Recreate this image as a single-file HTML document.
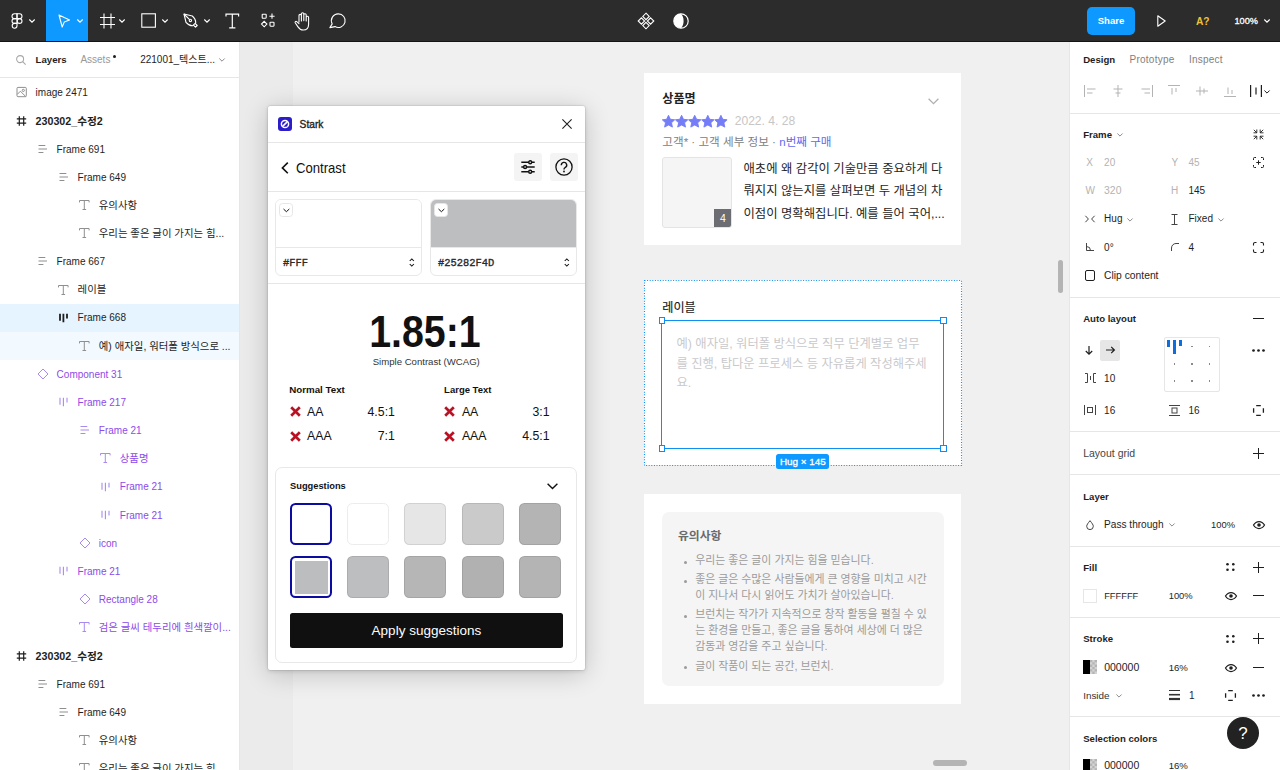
<!DOCTYPE html>
<html lang="ko">
<head>
<meta charset="utf-8">
<title>Figma - Stark Contrast</title>
<style>
*{box-sizing:border-box;margin:0;padding:0}
html,body{width:1280px;height:770px;overflow:hidden;background:#f0f0f0}
body{font-family:"Liberation Sans","Noto Sans CJK KR",sans-serif;font-size:10px;color:#1e1e1e;position:relative}
.abs{position:absolute}
svg{display:block;overflow:visible}
/* ---------- toolbar ---------- */
#toolbar{position:absolute;left:0;top:0;width:1280px;height:42px;background:#2c2c2c;border-bottom:1px solid #141414}
#toolbar .active{position:absolute;left:46px;top:0;width:42px;height:41px;background:#0d99ff}
#toolbar svg{position:absolute}
.tb-txt{position:absolute;color:#fff;font-size:10px;line-height:12px;white-space:nowrap}
#share{position:absolute;left:1087px;top:7px;width:48px;height:28px;border-radius:5px;background:#0d99ff;color:#fff;font-weight:bold;font-size:9.6px;line-height:28px;text-align:center}
/* ---------- left panel ---------- */
#left{position:absolute;left:0;top:42px;width:240px;height:728px;background:#fff;border-right:1px solid #e6e6e6;overflow:hidden}
#left .hdr{position:absolute;left:0;top:0;width:240px;height:36px;border-bottom:1px solid #e6e6e6}
#left .hdr span{position:absolute;top:12px;line-height:12px;white-space:nowrap}
.row{position:absolute;left:0;width:239px;height:28px}
.row .ic{position:absolute;top:8px;width:12px;height:12px}
.row .lb{position:absolute;top:7.8px;line-height:14px;white-space:nowrap;font-size:10px;letter-spacing:0}
.row.p .lb{color:#8d4be8}
.row.sel{background:#e5f4ff}
.row.sel2{background:#f2f9ff}
/* ---------- canvas ---------- */
#cv{position:absolute;left:0;top:0;width:1280px;height:770px;overflow:hidden}
#cvbg{position:absolute;left:240px;top:42px;width:829px;height:728px;background:#f0f0f0}
#strip{position:absolute;left:240px;top:42px;width:53px;height:728px;background:#ebebeb}
.card{position:absolute;background:#fff}
.k{position:absolute;white-space:nowrap}
.nt{left:51.200px;font-size:10.900px;line-height:16.100px;color:#9b9b9b}
.bl{position:absolute;left:40.300px;width:3px;height:3px;border-radius:50%;background:#9b9b9b}
.hd{position:absolute;width:6.500px;height:6.500px;background:#fff;border:1px solid #0e8eee}
/* ---------- stark ---------- */
#stark{position:absolute;left:267.500px;top:106px;width:317.500px;height:564px;background:#fff;border-radius:2px;box-shadow:0 0 0 .5px rgba(0,0,0,.10),0 1px 4px rgba(0,0,0,.14),0 4px 26px rgba(0,0,0,.20)}
.sx{display:inline-block;transform-origin:left center}
.cbox{position:absolute;top:93.200px;width:147.200px;height:76.400px;border:1px solid #e8e8e8;border-radius:6px;overflow:hidden;background:#fff}
.cfill{position:absolute;left:0;top:0;width:100%;height:47.500px;border-bottom:1px solid #e8e8e8}
.cbtn{position:absolute;left:3.400px;top:3.300px;width:13.400px;height:13.400px;border:1px solid #e6e6e6;border-radius:3.500px;background:#fff}
.cbtn svg{position:absolute;left:2.200px;top:3.700px}
.chex{position:absolute;left:7px;top:56.500px;font-family:"Liberation Mono",monospace;font-weight:normal;-webkit-text-stroke:.35px #2a2a2a;font-size:10.400px;line-height:13px;color:#2a2a2a;white-space:nowrap}
.cud{position:absolute;left:133.300px;top:57.600px}
.xi{position:absolute;fill:none;stroke:#b91224;stroke-width:2.700}
.rt{font-size:12.300px;line-height:17px;color:#111}
.rt.r{width:50px;text-align:right}
.sw{position:absolute;width:42px;height:42px;border-radius:5.500px;border:1px solid rgba(0,0,0,.09)}
.sw.on{border:2px solid #0c0ca2}
/* ---------- right panel ---------- */
#right{position:absolute;left:1069px;top:42px;width:211px;height:728px;background:#fff;border-left:1px solid #e6e6e6;overflow:hidden}
#right .t{position:absolute;line-height:12px;white-space:nowrap;font-size:10px}
#right .b{font-weight:bold;font-size:9.6px}
#right .g{color:#b3b3b3}
#right .ls{letter-spacing:.25px}
#right .hr{position:absolute;left:0;width:211px;height:1px;background:#e6e6e6}
#right svg{position:absolute}
</style>
</head>
<body>
<div id="cv">
  <div id="cvbg"></div>
  <div id="strip"></div>
  <!-- card 1 : review -->
  <div class="card" style="left:644px;top:73px;width:317.300px;height:172.200px">
    <div class="k" style="left:18.300px;top:17.200px;font-weight:bold;font-size:12.100px;line-height:18px;color:#222">상품명</div>
    <svg class="abs" style="left:284px;top:25px" width="11" height="7" viewBox="0 0 11 7" fill="none" stroke="#b0b0b0" stroke-width="1.300"><path d="M.600.800l4.900 4.900L10.400.800"/></svg>
    <svg class="abs" style="left:18px;top:41.500px" width="66" height="13" viewBox="0 0 66 13" fill="#747cf8" stroke="#747cf8" stroke-width=".9" stroke-linejoin="round">
      <path d="M6.500.300l1.900 4 4.300.500-3.200 3 .900 4.300L6.500 10 2.600 12.100l.900-4.300-3.200-3 4.300-.500z"/>
      <path d="M6.500.300l1.900 4 4.300.500-3.200 3 .900 4.300L6.500 10 2.600 12.100l.900-4.300-3.200-3 4.300-.500z" transform="translate(13.100 0)"/>
      <path d="M6.500.300l1.900 4 4.300.500-3.200 3 .900 4.300L6.500 10 2.600 12.100l.900-4.300-3.200-3 4.300-.500z" transform="translate(26.200 0)"/>
      <path d="M6.500.300l1.900 4 4.300.500-3.200 3 .900 4.300L6.500 10 2.600 12.100l.900-4.300-3.200-3 4.300-.500z" transform="translate(39.300 0)"/>
      <path d="M6.500.300l1.900 4 4.300.500-3.200 3 .900 4.300L6.500 10 2.600 12.100l.900-4.300-3.200-3 4.300-.500z" transform="translate(52.400 0)"/>
    </svg>
    <div class="k" style="left:90.700px;top:39.700px;font-size:12.100px;line-height:16px;color:#c6c6c6">2022. 4. 28</div>
    <div class="k" style="left:18.300px;top:60px;font-size:11.600px;line-height:17px;color:#808080">고객* · 고객 세부 정보 · <span style="color:#5f6bee">n번째 구매</span></div>
    <div class="abs" style="left:18.300px;top:84.300px;width:69.500px;height:70.300px;background:#f5f5f5;border:1px solid #e4e4e4;border-radius:3px;overflow:hidden">
      <div class="abs" style="right:-1px;bottom:-1px;width:18px;height:18.500px;background:#6c6d72;color:#fff;font-size:10.500px;line-height:18px;text-align:center">4</div>
    </div>
    <div class="k" style="left:99.500px;top:85.400px;font-size:12.350px;line-height:22.100px;color:#262626;width:215px;white-space:normal">애초에 왜 감각이 기술만큼 중요하게 다<br>뤄지지 않는지를 살펴보면 두 개념의 차<br>이점이 명확해집니다. 예를 들어 국어,...</div>
  </div>
  <!-- card 2 : label + textarea -->
  <div class="card" style="left:644px;top:280px;width:317.500px;height:185px">
    <div class="k" style="left:18.300px;top:18.600px;font-size:12.100px;line-height:18px;color:#1a1a1a;font-weight:400;-webkit-text-stroke:.15px #1a1a1a">레이블</div>
    <div class="k" style="left:32.500px;top:55.300px;font-size:12.300px;line-height:19.500px;color:#c9c9cb;width:260px;white-space:normal">예) 애자일, 워터폴 방식으로 직무 단계별로 업무<br>를 진행, 탑다운 프로세스 등 자유롭게 작성해주세<br>요.</div>
  </div>
  <svg class="abs" style="left:644px;top:280px" width="318" height="187" viewBox="0 0 318 187" fill="none"><rect x=".500" y=".500" width="317" height="185" stroke="#0e8eee" stroke-width="1.100" stroke-dasharray="1 1.600"/></svg>
  <div class="abs" style="left:661px;top:319.500px;width:283px;height:129px;border:1.500px solid #0e90f2"></div>
  <div class="hd" style="left:658.500px;top:317px"></div><div class="hd" style="left:940px;top:317px"></div>
  <div class="hd" style="left:658.500px;top:445px"></div><div class="hd" style="left:940px;top:445px"></div>
  <div class="abs" style="left:776.300px;top:454.300px;width:53.200px;height:15px;border-radius:2.500px;background:#0d99ff;color:#fff;font-weight:normal;-webkit-text-stroke:.3px #fff;font-size:9.900px;line-height:15px;text-align:center;white-space:nowrap">Hug × 145</div>
  <!-- card 3 : notice -->
  <div class="card" style="left:644px;top:494px;width:317px;height:210px">
    <div class="abs" style="left:18px;top:18px;width:281.500px;height:174px;background:#f5f5f5;border-radius:7px"></div>
    <div class="k" style="left:34px;top:34px;font-weight:bold;font-size:11.800px;line-height:17px;color:#6a6a6a">유의사항</div>
    <div class="k nt" style="top:57.800px">우리는 좋은 글이 가지는 힘을 믿습니다.</div>
    <div class="k nt" style="top:77px">좋은 글은 수많은 사람들에게 큰 영향을 미치고 시간<br>이 지나서 다시 읽어도 가치가 살아있습니다.</div>
    <div class="k nt" style="top:112.300px">브런치는 작가가 지속적으로 창작 활동을 펼칠 수 있<br>는 환경을 만들고, 좋은 글을 통하여 세상에 더 많은<br>감동과 영감을 주고 싶습니다.</div>
    <div class="k nt" style="top:163.700px">글이 작품이 되는 공간, 브런치.</div>
    <i class="bl" style="top:66.500px"></i><i class="bl" style="top:85.500px"></i><i class="bl" style="top:121px"></i><i class="bl" style="top:172.300px"></i>
  </div>
  <!-- scrollbars -->
  <div class="abs" style="left:1058px;top:259.500px;width:5px;height:33px;border-radius:3px;background:#b4b4b4"></div>
  <div class="abs" style="left:933px;top:760px;width:33.500px;height:6px;border-radius:3px;background:#b4b4b4"></div>
<div id="stark">
  <div class="abs" style="left:0;top:36px;width:100%;height:1px;background:#e6e6e6"></div>
  <div class="abs" style="left:10.600px;top:10.800px;width:14px;height:14px;border-radius:3px;background:#2b1dc9">
    <svg class="abs" style="left:2px;top:2px" width="10" height="10" viewBox="0 0 10 10" fill="none" stroke="#fff" stroke-width="1.500"><circle cx="5" cy="5" r="3.600"/><path d="M2.600 7.400l4.800-4.800"/></svg>
  </div>
  <div class="k" style="left:32.100px;top:11.800px;font-size:10.200px;line-height:13px;color:#222;-webkit-text-stroke:.35px #222">Stark</div>
  <svg class="abs" style="left:294.400px;top:13.200px" width="10" height="10" viewBox="0 0 10 10" fill="none" stroke="#1e1e1e" stroke-width="1.100"><path d="M.400.400l9.200 9.200M9.600.400L.400 9.600"/></svg>
  <!-- contrast row -->
  <svg class="abs" style="left:13.200px;top:55.800px" width="8" height="12" viewBox="0 0 8 12" fill="none" stroke="#111" stroke-width="1.600"><path d="M6.800.700L1.400 5.900l5.400 5.300"/></svg>
  <div class="k" style="left:28.900px;top:53.200px;font-size:14.200px;line-height:19px;color:#111"><span class="sx" style="transform:scaleX(.924)">Contrast</span></div>
  <div class="abs" style="left:246.800px;top:47.100px;width:28px;height:28px;border-radius:3px;background:#f4f4f4">
    <svg class="abs" style="left:7px;top:7px" width="14" height="14" viewBox="0 0 14 14" fill="none" stroke="#111" stroke-width="1.400"><path d="M.300 2.200h7.400M10.700 2.200h3M.300 7h2.300M5.600 7h8.100M.300 11.800h7.400M10.700 11.800h3"/><circle cx="9.200" cy="2.200" r="1.500"/><circle cx="4.100" cy="7" r="1.500"/><circle cx="9.200" cy="11.800" r="1.500"/></svg>
  </div>
  <div class="abs" style="left:282.300px;top:47.100px;width:28px;height:28px;border-radius:3px;background:#f4f4f4">
    <svg class="abs" style="left:5.300px;top:5.200px" width="18" height="18" viewBox="0 0 18 18" fill="none" stroke="#111" stroke-width="1.300"><circle cx="9" cy="9" r="8.100"/><path d="M6.300 7.200a2.700 2.700 0 1 1 3.900 2.300c-.8.500-1.200.9-1.200 1.900" stroke-width="1.400"/><circle cx="9" cy="13.500" r=".900" fill="#111" stroke="none"/></svg>
  </div>
  <div class="abs" style="left:0;top:85px;width:100%;height:1px;background:#e6e6e6"></div>
  <!-- colour boxes -->
  <div class="cbox" style="left:7.500px">
    <div class="cfill" style="background:#fff"></div>
    <div class="cbtn"><svg width="7" height="5" viewBox="0 0 7 5" fill="none" stroke="#111" stroke-width="1"><path d="M.500 1l2.900 2.700L6.300 1"/></svg></div>
    <div class="chex">#FFF</div>
    <svg class="cud" width="6" height="9" viewBox="0 0 6 9" fill="none" stroke="#111" stroke-width="1.050"><path d="M.700 3l2.100-2.100L4.900 3M.700 6l2.100 2.100L4.900 6"/></svg>
  </div>
  <div class="cbox" style="left:162.500px">
    <div class="cfill" style="background:#bdbec0"></div>
    <div class="cbtn"><svg width="7" height="5" viewBox="0 0 7 5" fill="none" stroke="#111" stroke-width="1"><path d="M.500 1l2.900 2.700L6.300 1"/></svg></div>
    <div class="chex">#25282F4D</div>
    <svg class="cud" width="6" height="9" viewBox="0 0 6 9" fill="none" stroke="#111" stroke-width="1.050"><path d="M.700 3l2.100-2.100L4.900 3M.700 6l2.100 2.100L4.900 6"/></svg>
  </div>
  <div class="abs" style="left:0;top:177px;width:100%;height:1px;background:#e6e6e6"></div>
  <!-- ratio -->
  <div class="abs" style="left:0;top:199.600px;width:314.400px;text-align:center;font-weight:bold;font-size:43.700px;line-height:52px;color:#111;white-space:nowrap"><span class="sx" style="transform:scaleX(.900);transform-origin:center">1.85:1</span></div>
  <div class="abs" style="left:0;top:249px;width:317.500px;text-align:center;font-size:9.600px;line-height:13px;color:#333;white-space:nowrap">Simple Contrast (WCAG)</div>
  <div class="k" style="left:21.700px;top:276.700px;font-weight:bold;font-size:9.750px;line-height:13px;color:#111">Normal Text</div>
  <div class="k" style="left:176.600px;top:276.700px;font-weight:bold;font-size:9.500px;line-height:13px;color:#111">Large Text</div>
  <!-- rows -->
  <svg class="xi" style="left:22.200px;top:300.200px" width="11" height="11" viewBox="0 0 11 11"><path d="M1.200 1.200l8.600 8.600M9.800 1.200L1.200 9.800"/></svg>
  <div class="k rt" style="left:39.500px;top:297.800px">AA</div><div class="k rt r" style="left:77.400px;top:297.800px">4.5:1</div>
  <svg class="xi" style="left:22.200px;top:324.700px" width="11" height="11" viewBox="0 0 11 11"><path d="M1.200 1.200l8.600 8.600M9.800 1.200L1.200 9.800"/></svg>
  <div class="k rt" style="left:39.500px;top:322.300px">AAA</div><div class="k rt r" style="left:77.400px;top:322.300px">7:1</div>
  <svg class="xi" style="left:176.900px;top:300.200px" width="11" height="11" viewBox="0 0 11 11"><path d="M1.200 1.200l8.600 8.600M9.800 1.200L1.200 9.800"/></svg>
  <div class="k rt" style="left:194.400px;top:297.800px">AA</div><div class="k rt r" style="left:232px;top:297.800px">3:1</div>
  <svg class="xi" style="left:176.900px;top:324.700px" width="11" height="11" viewBox="0 0 11 11"><path d="M1.200 1.200l8.600 8.600M9.800 1.200L1.200 9.800"/></svg>
  <div class="k rt" style="left:194.400px;top:322.300px">AAA</div><div class="k rt r" style="left:232px;top:322.300px">4.5:1</div>
  <!-- suggestions -->
  <div class="abs" style="left:7.400px;top:361.200px;width:302.200px;height:195.800px;border:1px solid #e8e8e8;border-radius:7px"></div>
  <div class="k" style="left:22.500px;top:374px;font-weight:bold;font-size:9.300px;line-height:13px;color:#111">Suggestions</div>
  <svg class="abs" style="left:279px;top:376.600px" width="11" height="7" viewBox="0 0 11 7" fill="none" stroke="#111" stroke-width="1.400"><path d="M.600.700l4.900 4.900 4.900-4.900"/></svg>
  <div class="sw on" style="left:22.200px;top:397.300px;background:#fff"></div>
  <div class="sw" style="left:79.400px;top:397.300px;background:#fff;border-color:#ececec"></div>
  <div class="sw" style="left:136.500px;top:397.300px;background:#e6e6e6"></div>
  <div class="sw" style="left:194.400px;top:397.300px;background:#cacaca"></div>
  <div class="sw" style="left:251.900px;top:397.300px;background:#b4b4b4"></div>
  <div class="sw on" style="left:22.200px;top:450px;background:#fff"><i style="position:absolute;left:3px;top:3.200px;width:33px;height:32.800px;background:#bcbdbf"></i></div>
  <div class="sw" style="left:79.400px;top:450px;background:#bdbec0"></div>
  <div class="sw" style="left:136.500px;top:450px;background:#b6b6b6"></div>
  <div class="sw" style="left:194.400px;top:450px;background:#b1b1b1"></div>
  <div class="sw" style="left:251.900px;top:450px;background:#b4b4b4"></div>
  <div class="abs" style="left:22.500px;top:506.900px;width:272.800px;height:34.800px;border-radius:2.500px;background:#101010;color:#fff;font-size:13.500px;line-height:36.200px;text-align:center;white-space:nowrap">Apply suggestions</div>
</div>

</div>

<div id="toolbar">
  <div class="active"></div>
  <!-- figma logo -->
  <svg style="left:11px;top:13px" width="12" height="16" viewBox="0 0 12 16" fill="none" stroke="#fff" stroke-width="1.1">
    <path d="M6 .8H3.4a2.4 2.4 0 0 0 0 4.8H6z"/><path d="M6 .8h2.6a2.4 2.4 0 0 1 0 4.8H6z"/>
    <path d="M6 5.6H3.4a2.4 2.4 0 0 0 0 4.8H6z"/><circle cx="8.6" cy="8" r="2.4"/>
    <path d="M6 10.4H3.4a2.4 2.4 0 1 0 2.6 2.4z"/>
  </svg>
  <svg style="left:29px;top:19px" width="6" height="4" viewBox="0 0 6 4" fill="none" stroke="#fff" stroke-width="1.1"><path d="M.3.5 3 3.2 5.7.5"/></svg>
  <!-- move -->
  <svg style="left:58px;top:14px" width="13" height="14" viewBox="0 0 13 14" fill="none" stroke="#fff" stroke-width="1.1" stroke-linejoin="round"><path d="M1 1l10.5 5-5.2 1.9L4.2 13z"/></svg>
  <svg style="left:77px;top:19px" width="6" height="4" viewBox="0 0 6 4" fill="none" stroke="#fff" stroke-width="1.1"><path d="M.3.5 3 3.2 5.7.5"/></svg>
  <!-- frame -->
  <svg style="left:100px;top:13px" width="15" height="16" viewBox="0 0 15 16" fill="none" stroke="#fff" stroke-width="1.1"><path d="M4 .6v14.8M11 .6v14.8M0 4.5h15M0 11.5h15"/></svg>
  <svg style="left:119px;top:19px" width="6" height="4" viewBox="0 0 6 4" fill="none" stroke="#fff" stroke-width="1.1"><path d="M.3.5 3 3.2 5.7.5"/></svg>
  <!-- rect -->
  <svg style="left:141px;top:13px" width="15" height="15" viewBox="0 0 15 15" fill="none" stroke="#fff" stroke-width="1.1"><rect x=".8" y=".8" width="13.6" height="13.4"/></svg>
  <svg style="left:162px;top:19px" width="6" height="4" viewBox="0 0 6 4" fill="none" stroke="#fff" stroke-width="1.1"><path d="M.3.5 3 3.2 5.7.5"/></svg>
  <!-- pen -->
  <svg style="left:183px;top:13px" width="16" height="16" viewBox="0 0 16 16" fill="none" stroke="#fff" stroke-width="1.150" stroke-linejoin="round"><path d="M1 1l8.300 2c2.300 2 3.500 4.400 3.400 6.800L9.800 12.700C7.400 12.800 5 11.600 3 9.300z"/><path d="M1 1l5.600 5.600"/><circle cx="7.400" cy="7.400" r="1.150"/><path d="M10.400 12.100l2.100 2.100 1.700-1.700-2.100-2.100"/></svg>
  <svg style="left:204px;top:19px" width="6" height="4" viewBox="0 0 6 4" fill="none" stroke="#fff" stroke-width="1.1"><path d="M.3.5 3 3.2 5.7.5"/></svg>
  <!-- text -->
  <svg style="left:225px;top:13px" width="15" height="16" viewBox="0 0 15 16" fill="none" stroke="#fff" stroke-width="1.2"><path d="M1 3.6V1.2h12.6v2.4M7.3 1.2v13.6M4.2 14.8h6.2"/></svg>
  <!-- components -->
  <svg style="left:261px;top:13px" width="15" height="15" viewBox="0 0 15 15" fill="none" stroke="#fff" stroke-width="1.1"><rect x="1.2" y="1.2" width="4" height="4" rx=".6"/><path d="M11 .6v5.2M8.4 3.2h5.2"/><path d="M3.2 8.4l2.7 2.7-2.7 2.7L.5 11.1z"/><rect x="9" y="9.2" width="4" height="4" rx=".6"/></svg>
  <!-- hand -->
  <svg style="left:294px;top:12px" width="17" height="19" viewBox="0 0 17 19" fill="none" stroke="#fff" stroke-width="1.1" stroke-linecap="round" stroke-linejoin="round"><path d="M5 10V3.6a1.2 1.2 0 0 1 2.4 0V9M7.4 8.6V2a1.2 1.2 0 0 1 2.4 0v6.6M9.8 8.6V3a1.2 1.2 0 0 1 2.4 0v6M12.2 9V5.4a1.2 1.2 0 0 1 2.4 0v6.8c0 3.4-2 5.8-5.4 5.8-2.6 0-4-1.200-5.400-3.400L1.200 10.800c-.5-.900.600-1.900 1.500-1.200L5 11.600"/></svg>
  <!-- comment -->
  <svg style="left:329px;top:13px" width="17" height="16" viewBox="0 0 17 16" fill="none" stroke="#fff" stroke-width="1.1" stroke-linejoin="round"><path d="M9.300.900a6.800 6.800 0 1 1-3.300 12.700L.900 14.600l2.300-3.700A6.800 6.800 0 0 1 9.300.900z"/></svg>
  <!-- center icons -->
  <svg style="left:637px;top:12px" width="18" height="18" viewBox="0 0 18 18" fill="none" stroke="#fff" stroke-width="1.1"><path d="M9 1.200l3.200 3.200L9 7.600 5.800 4.400zM4.400 5.800l3.200 3.200-3.200 3.200L1.200 9zM13.600 5.800l3.200 3.200-3.200 3.200L10.400 9zM9 10.400l3.200 3.200L9 16.800l-3.200-3.200z"/></svg>
  <svg style="left:673px;top:13px" width="16" height="16" viewBox="0 0 16 16"><circle cx="8" cy="8" r="7.200" fill="none" stroke="#fff" stroke-width="1.2"/><path d="M8 .8a7.200 7.200 0 0 0 0 14.400c1.700-1.700 2.600-4.300 2.600-7.200S9.700 2.500 8 .8z" fill="#fff"/></svg>
  <!-- right -->
  <div id="share">Share</div>
  <svg style="left:1157px;top:15px" width="9" height="12" viewBox="0 0 9 12" fill="none" stroke="#fff" stroke-width="1.1" stroke-linejoin="round"><path d="M.8.800l7.400 5.200-7.400 5.200z"/></svg>
  <div class="tb-txt" style="left:1196px;top:16.200px;color:#f2c037;font-weight:bold;font-size:10.200px">A?</div>
  <div class="tb-txt" style="left:1234.500px;top:15.200px;font-size:9.200px;-webkit-text-stroke:.3px #fff">100%</div>
  <svg style="left:1264px;top:19px" width="6" height="4" viewBox="0 0 6 4" fill="none" stroke="#fff" stroke-width="1.1"><path d="M.3.5 3 3.2 5.7.5"/></svg>
</div>

<div id="left">
<div class="hdr">
<svg style="position:absolute;left:15.800px;top:12.800px" width="10" height="10" viewBox="0 0 10 10" fill="none" stroke="#a8a8a8" stroke-width="1.050"><circle cx="4.100" cy="4.100" r="3.500"/><path d="M6.700 6.700l2.900 2.900"/></svg>
<span style="left:35.600px;font-weight:bold;font-size:9.600px">Layers</span>
<span style="left:80.400px;color:#999;font-size:10px">Assets</span>
<span style="left:113.300px;top:12.800px;width:3px;height:3px;border-radius:50%;background:#1e1e1e"></span>
<span style="left:140.200px;font-size:10px">221001_텍스트...</span>
<svg style="position:absolute;left:219px;top:16px" width="6" height="4" viewBox="0 0 6 4" fill="none" stroke="#8a8a8a" stroke-width="1"><path d="M.300.500 3 3.200 5.700.500"/></svg>
</div>
<div class="row " style="top:36.40px"><svg class="ic" style="left:15.6px" width="12" height="12" viewBox="0 0 12 12" fill="none" stroke="#8f8f8f" stroke-width="1"><rect x="1" y="1.400" width="9.300" height="9.300" rx="1"/><circle cx="7.300" cy="4.400" r="1.100"/><path d="M1.200 8.400l3.200-3.200 5.300 5.300"/></svg><span class="lb" style="left:35.6px;">image 2471</span></div>
<div class="row " style="top:64.56px"><svg class="ic" style="left:15.6px" width="12" height="12" viewBox="0 0 12 12" fill="none" stroke="#1e1e1e" stroke-width="1.200"><path d="M3.300 1.300v9.400M7.700 1.300v9.400M.800 3.800h9.400M.800 8.200h9.400"/></svg><span class="lb" style="left:35.6px;font-weight:bold;font-size:10.700px;">230302_수정2</span></div>
<div class="row " style="top:92.72px"><svg class="ic" style="left:36.8px" width="12" height="12" viewBox="0 0 12 12" fill="none" stroke="#8f8f8f" stroke-width="1"><path d="M1.500 2.500h6.800M1.500 6h8.500M1.500 9.500h4.900"/></svg><span class="lb" style="left:56.6px;">Frame 691</span></div>
<div class="row " style="top:120.88px"><svg class="ic" style="left:57.8px" width="12" height="12" viewBox="0 0 12 12" fill="none" stroke="#8f8f8f" stroke-width="1"><path d="M1.500 2.500h6.800M1.500 6h8.500M1.500 9.500h4.900"/></svg><span class="lb" style="left:77.6px;">Frame 649</span></div>
<div class="row " style="top:149.04px"><svg class="ic" style="left:78.8px" width="12" height="12" viewBox="0 0 12 12" fill="none" stroke="#8f8f8f" stroke-width="1"><path d="M.5 3.400v-1.900h9.600v1.900M5.300 1.500v9M3.500 10.500h3.600"/></svg><span class="lb" style="left:98.8px;font-size:10.4px;">유의사항</span></div>
<div class="row " style="top:177.20px"><svg class="ic" style="left:78.8px" width="12" height="12" viewBox="0 0 12 12" fill="none" stroke="#8f8f8f" stroke-width="1"><path d="M.5 3.400v-1.900h9.600v1.900M5.300 1.500v9M3.500 10.500h3.600"/></svg><span class="lb" style="left:98.8px;font-size:10.4px;">우리는 좋은 글이 가지는 힘...</span></div>
<div class="row " style="top:205.36px"><svg class="ic" style="left:36.8px" width="12" height="12" viewBox="0 0 12 12" fill="none" stroke="#8f8f8f" stroke-width="1"><path d="M1.500 2.500h6.800M1.500 6h8.500M1.500 9.500h4.900"/></svg><span class="lb" style="left:56.6px;">Frame 667</span></div>
<div class="row " style="top:233.52px"><svg class="ic" style="left:57.8px" width="12" height="12" viewBox="0 0 12 12" fill="none" stroke="#8f8f8f" stroke-width="1"><path d="M.5 3.400v-1.900h9.600v1.900M5.300 1.500v9M3.500 10.500h3.600"/></svg><span class="lb" style="left:77.6px;font-size:10.4px;">레이블</span></div>
<div class="row sel" style="top:261.68px"><svg class="ic" style="left:57.8px" width="12" height="12" viewBox="0 0 12 12" fill="none" stroke="#1e1e1e" stroke-width="1.800"><path d="M2 1.700v7M5.400 1.700v8.600M9 1.700v4.700"/></svg><span class="lb" style="left:77.6px;">Frame 668</span></div>
<div class="row sel2" style="top:289.84px"><svg class="ic" style="left:78.8px" width="12" height="12" viewBox="0 0 12 12" fill="none" stroke="#8f8f8f" stroke-width="1"><path d="M.5 3.400v-1.900h9.600v1.900M5.300 1.500v9M3.500 10.500h3.600"/></svg><span class="lb" style="left:98.8px;font-size:10.4px;">예) 애자일, 워터폴 방식으로 ...</span></div>
<div class="row p" style="top:318.00px"><svg class="ic" style="left:36.8px" width="12" height="12" viewBox="0 0 12 12" fill="none" stroke="#a98af0" stroke-width="1"><path d="M6 1l5 5-5 5-5-5z"/></svg><span class="lb" style="left:56.6px;">Component 31</span></div>
<div class="row p" style="top:346.16px"><svg class="ic" style="left:57.8px" width="12" height="12" viewBox="0 0 12 12" fill="none" stroke="#a98af0" stroke-width="1.100"><path d="M2 1.700v7M5.400 1.700v8.600M9 1.700v4.700"/></svg><span class="lb" style="left:77.6px;">Frame 217</span></div>
<div class="row p" style="top:374.32px"><svg class="ic" style="left:78.8px" width="12" height="12" viewBox="0 0 12 12" fill="none" stroke="#a98af0" stroke-width="1"><path d="M1.500 2.500h6.800M1.500 6h8.500M1.500 9.500h4.900"/></svg><span class="lb" style="left:98.8px;">Frame 21</span></div>
<div class="row p" style="top:402.48px"><svg class="ic" style="left:99.9px" width="12" height="12" viewBox="0 0 12 12" fill="none" stroke="#a98af0" stroke-width="1"><path d="M.5 3.400v-1.900h9.600v1.900M5.300 1.500v9M3.500 10.500h3.600"/></svg><span class="lb" style="left:119.8px;font-size:10.4px;">상품명</span></div>
<div class="row p" style="top:430.64px"><svg class="ic" style="left:99.9px" width="12" height="12" viewBox="0 0 12 12" fill="none" stroke="#a98af0" stroke-width="1.100"><path d="M2 1.700v7M5.400 1.700v8.600M9 1.700v4.700"/></svg><span class="lb" style="left:119.8px;">Frame 21</span></div>
<div class="row p" style="top:458.80px"><svg class="ic" style="left:99.9px" width="12" height="12" viewBox="0 0 12 12" fill="none" stroke="#a98af0" stroke-width="1.100"><path d="M2 1.700v7M5.400 1.700v8.600M9 1.700v4.700"/></svg><span class="lb" style="left:119.8px;">Frame 21</span></div>
<div class="row p" style="top:486.96px"><svg class="ic" style="left:78.8px" width="12" height="12" viewBox="0 0 12 12" fill="none" stroke="#a98af0" stroke-width="1"><path d="M6 1l5 5-5 5-5-5z"/></svg><span class="lb" style="left:98.8px;">icon</span></div>
<div class="row p" style="top:515.12px"><svg class="ic" style="left:57.8px" width="12" height="12" viewBox="0 0 12 12" fill="none" stroke="#a98af0" stroke-width="1.100"><path d="M2 1.700v7M5.400 1.700v8.600M9 1.700v4.700"/></svg><span class="lb" style="left:77.6px;">Frame 21</span></div>
<div class="row p" style="top:543.28px"><svg class="ic" style="left:78.8px" width="12" height="12" viewBox="0 0 12 12" fill="none" stroke="#a98af0" stroke-width="1"><path d="M6 1l5 5-5 5-5-5z"/></svg><span class="lb" style="left:98.8px;">Rectangle 28</span></div>
<div class="row p" style="top:571.44px"><svg class="ic" style="left:78.8px" width="12" height="12" viewBox="0 0 12 12" fill="none" stroke="#a98af0" stroke-width="1"><path d="M.5 3.400v-1.900h9.600v1.900M5.300 1.500v9M3.500 10.500h3.600"/></svg><span class="lb" style="left:98.8px;font-size:10.4px;">검은 글씨 테두리에 흰색깔이...</span></div>
<div class="row " style="top:599.60px"><svg class="ic" style="left:15.6px" width="12" height="12" viewBox="0 0 12 12" fill="none" stroke="#1e1e1e" stroke-width="1.200"><path d="M3.300 1.300v9.400M7.700 1.300v9.400M.800 3.800h9.400M.800 8.200h9.400"/></svg><span class="lb" style="left:35.6px;font-weight:bold;font-size:10.700px;">230302_수정2</span></div>
<div class="row " style="top:627.76px"><svg class="ic" style="left:36.8px" width="12" height="12" viewBox="0 0 12 12" fill="none" stroke="#8f8f8f" stroke-width="1"><path d="M1.500 2.500h6.800M1.500 6h8.500M1.500 9.500h4.900"/></svg><span class="lb" style="left:56.6px;">Frame 691</span></div>
<div class="row " style="top:655.92px"><svg class="ic" style="left:57.8px" width="12" height="12" viewBox="0 0 12 12" fill="none" stroke="#8f8f8f" stroke-width="1"><path d="M1.500 2.500h6.800M1.500 6h8.500M1.500 9.500h4.900"/></svg><span class="lb" style="left:77.6px;">Frame 649</span></div>
<div class="row " style="top:684.08px"><svg class="ic" style="left:78.8px" width="12" height="12" viewBox="0 0 12 12" fill="none" stroke="#8f8f8f" stroke-width="1"><path d="M.5 3.400v-1.900h9.600v1.900M5.300 1.500v9M3.500 10.500h3.600"/></svg><span class="lb" style="left:98.8px;font-size:10.4px;">유의사항</span></div>
<div class="row " style="top:712.24px"><svg class="ic" style="left:78.8px" width="12" height="12" viewBox="0 0 12 12" fill="none" stroke="#8f8f8f" stroke-width="1"><path d="M.5 3.400v-1.900h9.600v1.900M5.300 1.500v9M3.500 10.500h3.600"/></svg><span class="lb" style="left:98.8px;font-size:10.4px;">우리는 좋은 글이 가지는 힘...</span></div>
</div>

<div id="right">
<div class="t b" style="left:13.2px;top:11.75px;">Design</div>
<div class="t ls" style="left:59.5px;top:11.75px;font-size:10px;color:#808080;">Prototype</div>
<div class="t ls" style="left:118.9px;top:11.75px;font-size:10px;color:#808080;">Inspect</div>
<svg style="left:13.9px;top:43.3px" width="12" height="12" viewBox="0 0 12 12" fill="none" stroke="#b3b3b3" stroke-width="1" ><path d="M.5 0v12M3 4h8.500M3 8h5.500"/></svg>
<svg style="left:42.2px;top:43.3px" width="12" height="12" viewBox="0 0 12 12" fill="none" stroke="#b3b3b3" stroke-width="1" ><path d="M6 0v12M1.500 4h9M3.500 8h5"/></svg>
<svg style="left:70.6px;top:43.3px" width="12" height="12" viewBox="0 0 12 12" fill="none" stroke="#b3b3b3" stroke-width="1" ><path d="M11.500 0v12M.500 4H9M3.500 8h5.500"/></svg>
<svg style="left:97.6px;top:43.3px" width="12" height="12" viewBox="0 0 12 12" fill="none" stroke="#b3b3b3" stroke-width="1" ><path d="M0 .5h12M4 3v6.500M8 3v4"/></svg>
<svg style="left:126.3px;top:43.3px" width="12" height="12" viewBox="0 0 12 12" fill="none" stroke="#b3b3b3" stroke-width="1" ><path d="M0 6h12M4 1.500v9M8 3.500v5"/></svg>
<svg style="left:154.2px;top:43.3px" width="12" height="12" viewBox="0 0 12 12" fill="none" stroke="#b3b3b3" stroke-width="1" ><path d="M0 11.500h12M4 2.500V9M8 5v4"/></svg>
<svg style="left:180.0px;top:43.3px" width="12" height="12" viewBox="0 0 12 12" fill="none" stroke="#1e1e1e" stroke-width="1" ><path d="M.600 0v12M11.400 0v12M6 2.500v7" stroke-width="1.200"/></svg>
<svg style="left:194.0px;top:47.5px" width="6" height="4" viewBox="0 0 6 4" fill="none" stroke="#1e1e1e" stroke-width="1" ><path d="M.4.5 3 3.100 5.600.5"/></svg>
<div class="hr" style="top:70.8px"></div>
<div class="t b" style="left:13.2px;top:86.75px;">Frame</div>
<svg style="left:46.5px;top:91.4px" width="6" height="4" viewBox="0 0 6 4" fill="none" stroke="#8c8c8c" stroke-width="1" ><path d="M.4.5 3 3.100 5.600.5"/></svg>
<svg style="left:183.3px;top:87.4px" width="11" height="11" viewBox="0 0 11 11" fill="none" stroke="#1e1e1e" stroke-width="1" ><path d="M.5 3.800h3.300V.5M10.500 3.800H7.200V.5M.5 7.200h3.300v3.300M10.500 7.200H7.200v3.300M.800.800l3 3M10.200.800l-3 3M.800 10.200l3-3M10.200 10.200l-3-3" stroke-width=".9"/></svg>
<div class="t g" style="left:16.2px;top:114.75px;">X</div>
<div class="t g" style="left:34.1px;top:114.75px;">20</div>
<div class="t g" style="left:101.6px;top:114.75px;">Y</div>
<div class="t g" style="left:118.5px;top:114.75px;">45</div>
<svg style="left:183.3px;top:115.0px" width="11" height="11" viewBox="0 0 11 11" fill="none" stroke="#1e1e1e" stroke-width="1" ><path d="M.5 3V1.500a1 1 0 0 1 1-1H3M8 .5h1.500a1 1 0 0 1 1 1V3M10.500 8v1.500a1 1 0 0 1-1 1H8M3 10.500H1.500a1 1 0 0 1-1-1V8M5.500 3.300v4.400M3.300 5.500h4.400"/></svg>
<div class="t g" style="left:15.4px;top:142.75px;">W</div>
<div class="t g" style="left:34.1px;top:142.75px;font-size:10.4px;">320</div>
<div class="t g" style="left:101.0px;top:142.75px;">H</div>
<div class="t " style="left:118.5px;top:142.75px;">145</div>
<svg style="left:14.9px;top:173.2px" width="10" height="8" viewBox="0 0 10 8" fill="none" stroke="#444" stroke-width="1" ><path d="M.400.800l3 3.200-3 3.200M9.600.800l-3 3.200 3 3.200"/></svg>
<div class="t " style="left:34.1px;top:170.75px;">Hug</div>
<svg style="left:57.3px;top:175.7px" width="6" height="4" viewBox="0 0 6 4" fill="none" stroke="#8c8c8c" stroke-width="1" ><path d="M.4.5 3 3.100 5.600.5"/></svg>
<svg style="left:101.3px;top:171.7px" width="7" height="11" viewBox="0 0 7 11" fill="none" stroke="#444" stroke-width="1" ><path d="M.5.5h6M.5 10.500h6M3.500.5v10"/></svg>
<div class="t " style="left:118.5px;top:170.75px;">Fixed</div>
<svg style="left:148.0px;top:175.7px" width="6" height="4" viewBox="0 0 6 4" fill="none" stroke="#8c8c8c" stroke-width="1" ><path d="M.4.5 3 3.100 5.600.5"/></svg>
<svg style="left:16.2px;top:201.3px" width="8" height="8" viewBox="0 0 8 8" fill="none" stroke="#444" stroke-width="1" ><path d="M.5 0v7.500H8M.5 3.500a4 4 0 0 1 4 4"/></svg>
<div class="t " style="left:34.1px;top:199.75px;">0°</div>
<svg style="left:101.0px;top:201.3px" width="8" height="8" viewBox="0 0 8 8" fill="none" stroke="#444" stroke-width="1" ><path d="M.5 8V5A4.500 4.500 0 0 1 5 .5h3"/></svg>
<div class="t " style="left:118.5px;top:199.75px;">4</div>
<svg style="left:183.3px;top:199.8px" width="11" height="11" viewBox="0 0 11 11" fill="none" stroke="#1e1e1e" stroke-width="1" ><path d="M.5 3.500V2A1.500 1.500 0 0 1 2 .5h1.500M7.500.5H9A1.500 1.500 0 0 1 10.500 2v1.500M10.500 7.500V9A1.500 1.500 0 0 1 9 10.500H7.500M3.500 10.500H2A1.500 1.500 0 0 1 .5 9V7.500" stroke-width="1.100"/></svg>
<div style="position:absolute;left:14.9px;top:228.4px;width:10.200px;height:10.200px;border:1px solid #1e1e1e;border-radius:2px"></div>
<div class="t " style="left:34.1px;top:227.75px;font-size:10.3px;">Clip content</div>
<div class="hr" style="top:255.0px"></div>
<div class="t b" style="left:13.2px;top:270.75px;">Auto layout</div>
<svg style="left:183.3px;top:275.8px" width="11" height="1" viewBox="0 0 11 1" fill="none" stroke="#1e1e1e" stroke-width="1" ><path d="M0 .5h11"/></svg>
<svg style="left:15.3px;top:304.1px" width="8" height="9" viewBox="0 0 8 9" fill="none" stroke="#1e1e1e" stroke-width="1" ><path d="M4 0v8M.800 5l3.200 3.200L7.200 5" stroke-width="1.200"/></svg>
<div style="position:absolute;left:29.7px;top:298.0px;width:20.800px;height:20.800px;border-radius:2px;background:#e6e6e6"></div>
<svg style="left:36.2px;top:304.3px" width="9" height="8" viewBox="0 0 9 8" fill="none" stroke="#1e1e1e" stroke-width="1" ><path d="M0 4h8.400M5.200 .800l3.200 3.200L5.200 7.200" stroke-width="1.200"/></svg>
<div style="position:absolute;left:94.2px;top:294.6px;width:55.400px;height:55.400px;border:1px solid #e6e6e6;border-radius:2px"></div>
<i style="position:absolute;left:121.1px;top:303.9px;width:1.600px;height:1.600px;background:#8a8a8a"></i>
<i style="position:absolute;left:138.7px;top:303.9px;width:1.600px;height:1.600px;background:#8a8a8a"></i>
<i style="position:absolute;left:103.5px;top:321.0px;width:1.600px;height:1.600px;background:#8a8a8a"></i>
<i style="position:absolute;left:121.1px;top:321.0px;width:1.600px;height:1.600px;background:#8a8a8a"></i>
<i style="position:absolute;left:138.7px;top:321.0px;width:1.600px;height:1.600px;background:#8a8a8a"></i>
<i style="position:absolute;left:103.5px;top:338.4px;width:1.600px;height:1.600px;background:#8a8a8a"></i>
<i style="position:absolute;left:121.1px;top:338.4px;width:1.600px;height:1.600px;background:#8a8a8a"></i>
<i style="position:absolute;left:138.7px;top:338.4px;width:1.600px;height:1.600px;background:#8a8a8a"></i>
<i style="position:absolute;left:97.3px;top:298.0px;width:2.700px;height:7.4px;background:#0d6fde"></i>
<i style="position:absolute;left:103.3px;top:298.0px;width:2.700px;height:13.5px;background:#0d6fde"></i>
<i style="position:absolute;left:109.2px;top:298.0px;width:2.700px;height:5.7px;background:#0d6fde"></i>
<svg style="left:182.3px;top:306.8px" width="13" height="3" viewBox="0 0 13 3" fill="none" stroke="#1e1e1e" stroke-width="1" ><circle cx="1.500" cy="1.500" r="1.350" fill="#1e1e1e" stroke="none"/><circle cx="6.500" cy="1.500" r="1.350" fill="#1e1e1e" stroke="none"/><circle cx="11.500" cy="1.500" r="1.350" fill="#1e1e1e" stroke="none"/></svg>
<svg style="left:14.9px;top:331.4px" width="11" height="10" viewBox="0 0 11 10" fill="none" stroke="#444" stroke-width="1" ><path d="M0 .5h2.500v9H0M11 .5H8.500v9H11M5.500 3v4"/></svg>
<div class="t " style="left:34.1px;top:330.75px;">10</div>
<svg style="left:13.9px;top:363.2px" width="12" height="10" viewBox="0 0 12 10" fill="none" stroke="#444" stroke-width="1" ><path d="M.5 0v10M11.500 0v10"/><rect x="3.500" y="2.500" width="5" height="5"/></svg>
<div class="t " style="left:34.1px;top:362.75px;">16</div>
<svg style="left:98.9px;top:362.7px" width="11" height="11" viewBox="0 0 11 11" fill="none" stroke="#444" stroke-width="1" ><path d="M0 .5h11M0 10.500h11"/><rect x="3" y="3" width="5" height="5"/></svg>
<div class="t " style="left:118.5px;top:362.75px;">16</div>
<svg style="left:183.3px;top:362.7px" width="11" height="11" viewBox="0 0 11 11" fill="none" stroke="#1e1e1e" stroke-width="1" ><path d="M3.200.600h4.600M3.200 10.400h4.600M.600 3.200v4.600M10.400 3.200v4.600" stroke-width="1.300"/></svg>
<div class="hr" style="top:389.2px"></div>
<div class="t " style="left:13.2px;top:405.25px;font-size:10.5px;color:#444;">Layout grid</div>
<svg style="left:183.3px;top:406.0px" width="11" height="11" viewBox="0 0 11 11" fill="none" stroke="#1e1e1e" stroke-width="1" ><path d="M5.500 0v11M0 5.500h11"/></svg>
<div class="hr" style="top:432.2px"></div>
<div class="t b" style="left:13.2px;top:448.75px;">Layer</div>
<svg style="left:16.2px;top:477.6px" width="8" height="10" viewBox="0 0 8 10" fill="none" stroke="#444" stroke-width="1" ><path d="M4 .700C2 3.200.700 4.800.700 6.300a3.300 3.300 0 0 0 6.600 0C7.300 4.800 6 3.200 4 .700z"/></svg>
<div class="t " style="left:34.1px;top:476.75px;font-size:10.1px;">Pass through</div>
<svg style="left:99.0px;top:481.1px" width="6" height="4" viewBox="0 0 6 4" fill="none" stroke="#8c8c8c" stroke-width="1" ><path d="M.4.5 3 3.100 5.600.5"/></svg>
<div class="t " style="left:141.1px;top:476.75px;font-size:9.4px;">100%</div>
<svg style="left:183.0px;top:479.0px" width="12" height="8" viewBox="0 0 12 8" fill="none" stroke="#1e1e1e" stroke-width="1" ><path d="M.5 4C2 1.500 3.800.500 6 .5s4 1 5.500 3.500C10 6.500 8.200 7.500 6 7.500S2 6.500.5 4z" stroke-width="1.250"/><circle cx="6" cy="4" r="1.800" fill="#1e1e1e" stroke="none"/></svg>
<div class="hr" style="top:504.0px"></div>
<div class="t b" style="left:13.2px;top:519.75px;">Fill</div>
<svg style="left:156.1px;top:521.4px" width="9" height="8" viewBox="0 0 9 8" fill="none" stroke="#1e1e1e" stroke-width="1" ><circle cx="1.500" cy="1.200" r="1.300" fill="#1e1e1e" stroke="none"/><circle cx="7.300" cy="1.200" r="1.300" fill="#1e1e1e" stroke="none"/><circle cx="1.500" cy="6.800" r="1.300" fill="#1e1e1e" stroke="none"/><circle cx="7.300" cy="6.800" r="1.300" fill="#1e1e1e" stroke="none"/></svg>
<svg style="left:183.3px;top:519.7px" width="11" height="11" viewBox="0 0 11 11" fill="none" stroke="#1e1e1e" stroke-width="1" ><path d="M5.500 0v11M0 5.500h11"/></svg>
<div style="position:absolute;left:13.2px;top:546.6px;width:14px;height:14px;background:#fff;border:1px solid #e6e6e6"></div>
<div class="t " style="left:34.2px;top:548.25px;font-size:9.3px;">FFFFFF</div>
<div class="t " style="left:98.7px;top:547.75px;font-size:9.4px;">100%</div>
<svg style="left:155.0px;top:550.2px" width="12" height="8" viewBox="0 0 12 8" fill="none" stroke="#1e1e1e" stroke-width="1" ><path d="M.5 4C2 1.500 3.800.500 6 .5s4 1 5.500 3.500C10 6.500 8.200 7.500 6 7.500S2 6.500.5 4z" stroke-width="1.250"/><circle cx="6" cy="4" r="1.800" fill="#1e1e1e" stroke="none"/></svg>
<svg style="left:183.3px;top:553.1px" width="11" height="1" viewBox="0 0 11 1" fill="none" stroke="#1e1e1e" stroke-width="1" ><path d="M0 .5h11"/></svg>
<div class="hr" style="top:575.0px"></div>
<div class="t b" style="left:13.2px;top:590.75px;">Stroke</div>
<svg style="left:156.1px;top:592.8px" width="9" height="8" viewBox="0 0 9 8" fill="none" stroke="#1e1e1e" stroke-width="1" ><circle cx="1.500" cy="1.200" r="1.300" fill="#1e1e1e" stroke="none"/><circle cx="7.300" cy="1.200" r="1.300" fill="#1e1e1e" stroke="none"/><circle cx="1.500" cy="6.800" r="1.300" fill="#1e1e1e" stroke="none"/><circle cx="7.300" cy="6.800" r="1.300" fill="#1e1e1e" stroke="none"/></svg>
<svg style="left:183.3px;top:591.1px" width="11" height="11" viewBox="0 0 11 11" fill="none" stroke="#1e1e1e" stroke-width="1" ><path d="M5.500 0v11M0 5.500h11"/></svg>
<div style="position:absolute;left:13.2px;top:618.2px;width:14px;height:14px;background:#000;overflow:hidden"><svg style="left:7px;top:0" width="7" height="14" viewBox="0 0 7 14" stroke="none"><rect width="7" height="14" fill="#d4d4d4"/><path d="M0 0h2.300v2.300H0zM4.600 0H7v2.300H4.600zM2.300 2.300h2.300v2.300H2.300zM0 4.600h2.300v2.300H0zM4.600 4.600H7v2.300H4.600zM2.300 7h2.300v2.300H2.300zM0 9.300h2.300v2.300H0zM4.600 9.300H7v2.300H4.600zM2.300 11.600h2.300V14H2.300z" fill="#b5b5b5"/></svg></div>
<div class="t " style="left:34.2px;top:619.25px;font-size:10.5px;">000000</div>
<div class="t " style="left:98.7px;top:619.75px;font-size:9.6px;">16%</div>
<svg style="left:155.0px;top:621.6px" width="12" height="8" viewBox="0 0 12 8" fill="none" stroke="#1e1e1e" stroke-width="1" ><path d="M.5 4C2 1.500 3.800.500 6 .5s4 1 5.500 3.500C10 6.500 8.200 7.500 6 7.500S2 6.500.5 4z" stroke-width="1.250"/><circle cx="6" cy="4" r="1.800" fill="#1e1e1e" stroke="none"/></svg>
<svg style="left:183.3px;top:624.5px" width="11" height="1" viewBox="0 0 11 1" fill="none" stroke="#1e1e1e" stroke-width="1" ><path d="M0 .5h11"/></svg>
<div class="t " style="left:13.2px;top:647.75px;font-size:9.9px;color:#333;">Inside</div>
<svg style="left:45.5px;top:651.7px" width="6" height="4" viewBox="0 0 6 4" fill="none" stroke="#8c8c8c" stroke-width="1" ><path d="M.4.5 3 3.100 5.600.5"/></svg>
<svg style="left:98.7px;top:648.0px" width="11" height="10" viewBox="0 0 11 10" fill="none" stroke="#333" stroke-width="1" ><path d="M0 .5h11" stroke-width="1"/><path d="M0 4.700h11" stroke-width="1.600"/><path d="M0 9h11" stroke-width="2.200"/></svg>
<div class="t " style="left:119.0px;top:647.75px;">1</div>
<svg style="left:155.3px;top:647.7px" width="11" height="11" viewBox="0 0 11 11" fill="none" stroke="#1e1e1e" stroke-width="1" ><path d="M3.200.600h4.600M3.200 10.400h4.600M.600 3.200v4.600M10.400 3.200v4.600" stroke-width="1.300"/></svg>
<svg style="left:182.0px;top:651.9px" width="13" height="3" viewBox="0 0 13 3" fill="none" stroke="#1e1e1e" stroke-width="1" ><circle cx="1.500" cy="1.500" r="1.350" fill="#1e1e1e" stroke="none"/><circle cx="6.500" cy="1.500" r="1.350" fill="#1e1e1e" stroke="none"/><circle cx="11.500" cy="1.500" r="1.350" fill="#1e1e1e" stroke="none"/></svg>
<div class="hr" style="top:674.0px"></div>
<div class="t b" style="left:13.2px;top:690.75px;">Selection colors</div>
<div style="position:absolute;left:13.2px;top:717.0px;width:14px;height:14px;background:#000;overflow:hidden"><svg style="left:7px;top:0" width="7" height="14" viewBox="0 0 7 14" stroke="none"><rect width="7" height="14" fill="#d4d4d4"/><path d="M0 0h2.300v2.300H0zM4.600 0H7v2.300H4.600zM2.300 2.300h2.300v2.300H2.300zM0 4.600h2.300v2.300H0zM4.600 4.600H7v2.300H4.600zM2.300 7h2.300v2.300H2.300zM0 9.300h2.300v2.300H0zM4.600 9.300H7v2.300H4.600zM2.300 11.600h2.300V14H2.300z" fill="#b5b5b5"/></svg></div>
<div class="t " style="left:34.2px;top:717.25px;font-size:10.5px;">000000</div>
<div class="t " style="left:98.7px;top:717.75px;font-size:9.6px;">16%</div>
<div style="position:absolute;left:157.0px;top:675.0px;width:32px;height:32px;border-radius:50%;background:#222;color:#fff;font-size:17px;line-height:33px;text-align:center">?</div>
</div>

</body>
</html>
